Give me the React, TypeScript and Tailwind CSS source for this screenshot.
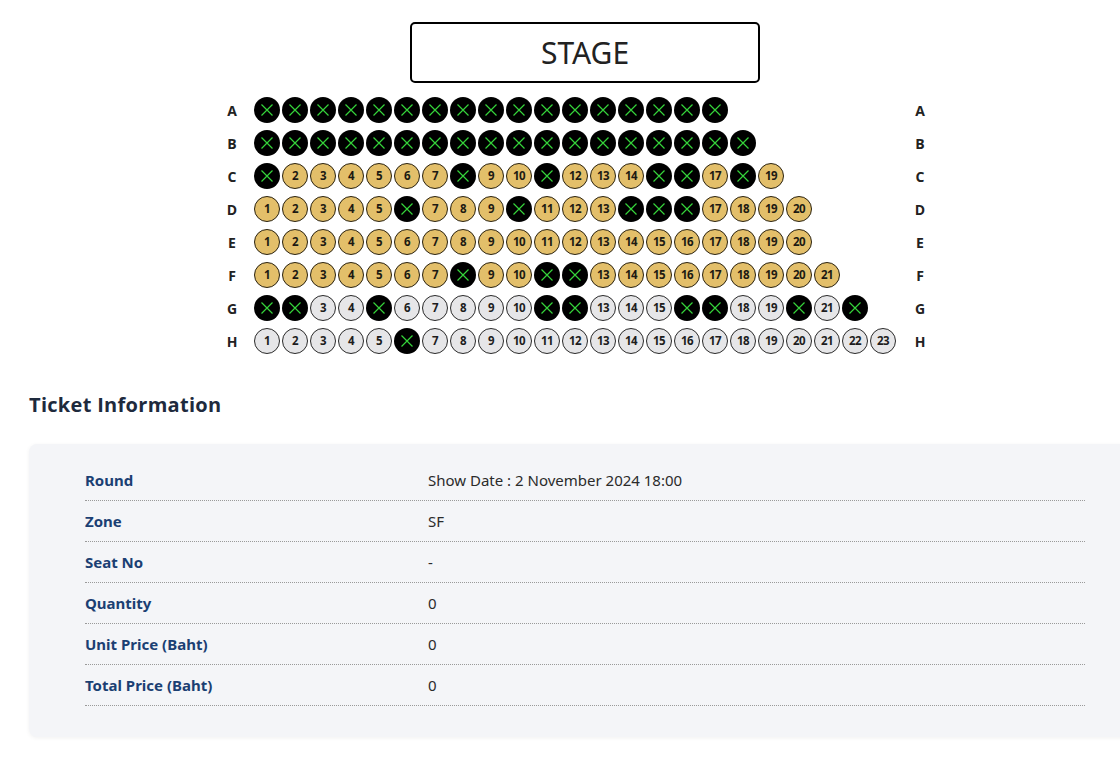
import React from "react";

type Row = { label: string; count: number; taken: number[]; tone: "gold" | "gray" };

const rows: Row[] = [
  { label: "A", count: 17, taken: Array.from({ length: 17 }, (_, i) => i + 1), tone: "gold" },
  { label: "B", count: 18, taken: Array.from({ length: 18 }, (_, i) => i + 1), tone: "gold" },
  { label: "C", count: 19, taken: [1, 8, 11, 15, 16, 18], tone: "gold" },
  { label: "D", count: 20, taken: [6, 10, 14, 15, 16], tone: "gold" },
  { label: "E", count: 20, taken: [], tone: "gold" },
  { label: "F", count: 21, taken: [8, 11, 12], tone: "gold" },
  { label: "G", count: 22, taken: [1, 2, 5, 11, 12, 16, 17, 20, 22], tone: "gray" },
  { label: "H", count: 23, taken: [6], tone: "gray" },
];

const info = [
  ["Round", "Show Date : 2 November 2024 18:00"],
  ["Zone", "SF"],
  ["Seat No", "-"],
  ["Quantity", "0"],
  ["Unit Price (Baht)", "0"],
  ["Total Price (Baht)", "0"],
];

const Seat: React.FC<{ n: number; taken: boolean; tone: "gold" | "gray" }> = ({ n, taken, tone }) => {
  if (taken) {
    return (
      <div className="w-[26px] h-[26px] rounded-full bg-black flex items-center justify-center shrink-0">
        <svg width="14" height="14" viewBox="0 0 14 14">
          <path d="M1.5 1.5 L12.5 12.5 M12.5 1.5 L1.5 12.5" stroke="#35d43a" strokeWidth="1.2" />
        </svg>
      </div>
    );
  }
  return (
    <div
      className={
        tone === "gold"
          ? "w-[26px] h-[26px] rounded-full bg-[#e3bf6a] border border-[#2a2210] flex items-center justify-center shrink-0 text-[11.5px] font-bold text-[#1d1a12] tracking-[-0.5px]"
          : "w-[26px] h-[26px] rounded-full bg-[#e6e6e8] border border-[#2a2a2a] flex items-center justify-center shrink-0 text-[11.5px] font-bold text-[#1d1d1d] tracking-[-0.5px]"
      }
    >
      {n}
    </div>
  );
};

export default function App() {
  return (
    <div className="w-full overflow-hidden bg-white font-['Noto_Sans',sans-serif] min-h-[767px]">
      <div className="w-[1112px] ml-[29px] pt-[22px]">
        <div className="mx-auto w-[350px] h-[61px] border-2 border-black rounded-[5px] flex items-center justify-center text-[30px] text-[#222] leading-none">
          STAGE
        </div>

        <div className="ml-[193px] mt-[14px] flex flex-col gap-[7px]">
          {rows.map((r) => (
            <div key={r.label} className="flex items-center h-[26px]">
              <div className="w-5 text-center text-[14px] font-bold text-[#222] font-['Open_Sans',sans-serif]">{r.label}</div>
              <div className="ml-[12px] w-[642px] flex gap-[2px]">
                {Array.from({ length: r.count }, (_, i) => (
                  <Seat key={i} n={i + 1} taken={r.taken.includes(i + 1)} tone={r.tone} />
                ))}
              </div>
              <div className="ml-[14px] w-5 text-center text-[14px] font-bold text-[#222] font-['Open_Sans',sans-serif]">{r.label}</div>
            </div>
          ))}
        </div>

        <h2 className="mt-[39px] text-[20px] leading-[24px] font-bold tracking-[0.3px] text-[#1e2a3d] font-['Open_Sans',sans-serif]">
          Ticket Information
        </h2>

        <div className="mt-[27px] bg-[#f4f5f8] rounded-[8px] shadow-[0_1px_4px_rgba(0,0,0,0.06)] pt-[16px] pb-[31px] px-[56px]">
          {info.map(([k, v]) => (
            <div key={k} className="flex items-center h-[41px] border-b border-dotted border-[#9a9a9a]">
              <div className="w-[343px] text-[15px] font-bold text-[#1b3f73]">{k}</div>
              <div className="text-[15px] text-[#2b2b2b]">{v}</div>
            </div>
          ))}
        </div>
      </div>
    </div>
  );
}
